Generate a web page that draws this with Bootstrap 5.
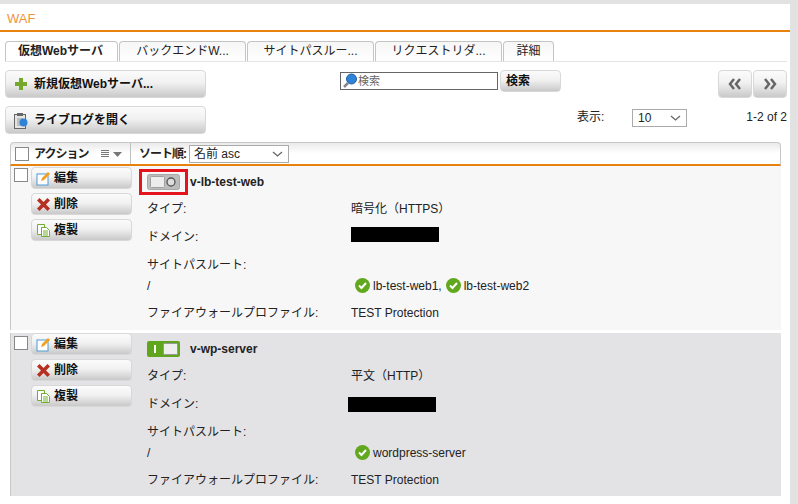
<!DOCTYPE html>
<html lang="ja">
<head>
<meta charset="utf-8">
<title>WAF</title>
<link rel="stylesheet" href="https://cdn.jsdelivr.net/npm/bootstrap@5.3.0/dist/css/bootstrap.min.css">
<style>
html,body{height:100%;overflow:hidden}
body{background:#e2e2e2;padding:4px 8px 0 0;font:12px/16px "Liberation Sans","Noto Sans CJK JP",sans-serif;color:#222}
.shell{background:#fff;height:500px;overflow:hidden}
.pane-title{height:28px;border-bottom:2px solid #e8820c;color:#f0953a;font-size:13px;padding:7px 0 0 7px;line-height:16px}
.tabstrip{margin:9px 3px 0 5px;gap:1px;height:21px;border-bottom:1px solid #e4e4e4}
.tabx{height:20px;border:1px solid #c4c4c4;border-bottom:0;border-radius:4px 4px 0 0;background:linear-gradient(#f6f6f6,#fff);text-align:center;line-height:19px;font-size:12px;color:#222;width:127px;flex:none}
.tabx.on{width:113px;font-weight:700;background:#fff;padding-right:2px}
.tabx.w50{width:51px}
.glossy{border:1px solid #d8d8d8;border-radius:4px;background:linear-gradient(#fbfbfb 0,#f1f1f1 45%,#c9c9c9 100%);font-weight:700;color:#111;display:flex;align-items:center;padding:0}
.bar-a{margin:8px 3px 0 5px;height:28px;position:relative}
.wide{width:201px;height:28px;font-size:12px;padding-left:8px;gap:6px}
.finder{margin-left:134px;margin-top:2px;width:158px;height:18px;border:1px solid #666;display:flex;align-items:center;font-size:11px;color:#666;padding-left:1px;background:#fff}
.go{width:61px;height:22px;margin-left:2px;padding-left:5px;font-size:12px}
.pg{width:34px;height:28px;justify-content:center}
.pg+.pg{margin-left:1px}
.bar-b{margin:8px 3px 0 5px;height:28px}
.show-lbl{margin-left:371px;width:55px;margin-top:3px}
.pick{border:1px solid #aaa;background:#fff;height:18px;font-size:12px;line-height:16px;padding:0 5px;display:flex;align-items:center;justify-content:space-between;color:#222}
.pick-a{width:55px;margin-top:3px}
.count{margin-left:auto;margin-top:3px}
.gridhead{margin:8px 9px 0 10px;height:24px;border:1px solid #c8c8c8;border-bottom:2px solid #e8820c;border-radius:4px 4px 0 0;background:linear-gradient(#eaeaea,#fff 50%);align-items:center}
.hcol{width:120px;height:100%;border-right:1px solid #c0c0c0;padding-left:4px;gap:5px;align-items:center;font-weight:700;flex:none}
.snug{letter-spacing:-1px}
.box{width:14px;height:14px;border:1px solid #888;background:#fff;flex:none;display:block}
.pick-s{width:100px;font-weight:400;height:18px;margin-left:3px;margin-top:1px;padding-left:4px}
.rowx{margin:0 9px 0 10px;border-left:1px solid #c8c8c8}
.rowx.r1{background:#f7f7f7;height:164px;margin-bottom:3px}
.rowx.r2{background:#e3e3e5;height:163px}
.acts{width:121px;flex:none;padding:1px 0 0 3px}
.r1 .box{margin-top:1px}
.r2 .acts{padding-top:0}
.r2 .box{margin-top:3px}
.stack{margin-left:3px;gap:4px;display:flex;flex-direction:column}
.mini{width:101px;height:22px;font-size:12px;padding-left:4px;gap:3px}
.body-c{padding-left:15px;flex:1}
.head-r{height:32px;margin-bottom:-3px;align-items:center;font-weight:700;gap:10px;position:relative}
.togg{width:33px;height:16px;display:block;flex:none}
.redframe{position:absolute;left:-8px;top:3px;width:49px;height:26px;border:3px solid #e3141e}
.line{height:28px;display:flex;align-items:center}
.k{width:204px;flex:none}
.mask{width:88px;height:15px;background:#000;display:block}
.mask-top{margin-top:-6px}
.mask-left{margin-left:-3px}
.pathline{height:21px;margin:-4px 0 3px}
.okc{width:15px;height:15px;flex:none;margin:0 3px 0 4px}
</style>
</head>
<body>
<div class="shell">
  <div class="pane-title">WAF</div>
  <div class="d-flex tabstrip">
    <div class="tabx on">仮想Webサーバ</div>
    <div class="tabx">バックエンドW...</div>
    <div class="tabx">サイトパスルー...</div>
    <div class="tabx">リクエストリダ...</div>
    <div class="tabx w50">詳細</div>
  </div>
  <div class="d-flex bar-a">
    <button class="glossy wide" type="button">
      <svg width="14" height="14" viewBox="0 0 14 14"><path d="M5 1h4v4h4v4H9v4H5V9H1V5h4z" fill="#76a82c"/></svg>
      新規仮想Webサーバ...
    </button>
    <div class="finder">
      <svg width="16" height="16" viewBox="0 0 16 16"><path d="M6 10l-4 4" stroke="#888" stroke-width="2.500"/><circle cx="9.500" cy="6" r="5" fill="#2f83d6" stroke="#1f5fa8"/></svg>検索
    </div>
    <button class="glossy go" type="button">検索</button>
    <button class="glossy pg ms-auto" type="button" aria-label="前へ"><svg width="14" height="12" viewBox="0 0 14 12"><path d="M6 1L2 6l4 5M12 1L8 6l4 5" fill="none" stroke="#666" stroke-width="2.500"/></svg></button>
    <button class="glossy pg" type="button" aria-label="次へ"><svg width="14" height="12" viewBox="0 0 14 12"><path d="M2 1l4 5-4 5M8 1l4 5-4 5" fill="none" stroke="#666" stroke-width="2.500"/></svg></button>
  </div>
  <div class="d-flex bar-b">
    <button class="glossy wide" type="button">
      <svg width="14" height="17" viewBox="0 0 14 17"><rect x=".5" y="2.500" width="11" height="14" fill="#e4e4e4" stroke="#666"/><rect x="3" y="1" width="6" height="3" fill="#666"/><path d="M3 7h6M3 9h4M3 11h4M3 13h4" stroke="#999"/><circle cx="9.500" cy="10.500" r="4" fill="#2f83d6"/></svg>
      ライブログを開く
    </button>
    <div class="show-lbl">表示:</div>
    <div class="pick pick-a">10 <svg width="11" height="6" viewBox="0 0 11 6"><path d="M1 1l4.500 4L10 1" fill="none" stroke="#666" stroke-width="1.300"/></svg></div>
    <div class="count">1-2 of 2</div>
  </div>
  <div class="d-flex gridhead">
    <div class="d-flex hcol">
      <span class="box"></span><span class="snug">アクション</span>
      <svg class="ms-auto me-2" width="21" height="8" viewBox="0 0 21 8"><path d="M0 .5h8M0 2.500h8M0 4.500h8M0 6.500h8" stroke="#777"/><path d="M12 2h9l-4.500 5z" fill="#777"/></svg>
    </div>
    <div class="d-flex align-items-center ps-2 fw-bold"><span class="snug">ソート順:</span>
      <div class="pick pick-s">名前 asc <svg width="11" height="6" viewBox="0 0 11 6"><path d="M1 1l4.500 4L10 1" fill="none" stroke="#666" stroke-width="1.300"/></svg></div>
    </div>
  </div>

  <div class="d-flex rowx r1">
    <div class="d-flex acts">
      <span class="box"></span>
      <div class="stack">
        <button class="glossy mini" type="button"><svg width="15" height="15" viewBox="0 0 15 15"><rect x="1" y="3" width="11" height="11" fill="#fff" stroke="#4a9bd8"/><path d="M5 10l1-3 6-6 2 2-6 6z" fill="#f0a020"/></svg>編集</button>
        <button class="glossy mini" type="button"><svg width="15" height="15" viewBox="0 0 15 15"><path d="M1 3.500L3.500 1l4 4 4-4L14 3.500l-4 4 4 4-2.500 2.500-4-4-4 4L1 11.500l4-4z" fill="#b53022"/></svg>削除</button>
        <button class="glossy mini" type="button"><svg width="15" height="15" viewBox="0 0 15 15"><path d="M1.500 1.500h7v3h-3v7h-4z" fill="#fff" stroke="#70b030"/><path d="M5.500 4.500h5l3 3v6h-8z" fill="#fff" stroke="#70b030"/><path d="M7 8h5M7 10h5M7 12h5" stroke="#70b030"/></svg>複製</button>
      </div>
    </div>
    <div class="body-c">
      <div class="d-flex head-r">
        <svg class="togg" viewBox="0 0 33 16"><rect x=".5" y=".5" width="32" height="15" rx="2" fill="#bdbdbd" stroke="#a8a8a8"/><rect x="3.500" y="2.500" width="14" height="11" rx="1" fill="#ececec" stroke="#a0a0a0"/><circle cx="24" cy="8" r="4" fill="#ddd" stroke="#555" stroke-width="1.300"/></svg>
        <span>v-lb-test-web</span>
        <span class="redframe"></span>
      </div>
      <div class="line"><span class="k">タイプ:</span><span>暗号化（HTTPS）</span></div>
      <div class="line"><span class="k">ドメイン:</span><span class="mask mask-top"></span></div>
      <div class="line"><span class="k">サイトパスルート:</span></div>
      <div class="line pathline"><span class="k">/</span>
        <svg class="okc" viewBox="0 0 15 15"><circle cx="7.500" cy="7.500" r="7.500" fill="#62a81e"/><path d="M4 7.500l2.500 2.500L11 5" fill="none" stroke="#fff" stroke-width="2"/></svg><span>lb-test-web1,</span>
        <svg class="okc" viewBox="0 0 15 15"><circle cx="7.500" cy="7.500" r="7.500" fill="#62a81e"/><path d="M4 7.500l2.500 2.500L11 5" fill="none" stroke="#fff" stroke-width="2"/></svg><span>lb-test-web2</span>
      </div>
      <div class="line"><span class="k">ファイアウォールプロファイル:</span><span>TEST Protection</span></div>
    </div>
  </div>

  <div class="d-flex rowx r2">
    <div class="d-flex acts">
      <span class="box"></span>
      <div class="stack">
        <button class="glossy mini" type="button"><svg width="15" height="15" viewBox="0 0 15 15"><rect x="1" y="3" width="11" height="11" fill="#fff" stroke="#4a9bd8"/><path d="M5 10l1-3 6-6 2 2-6 6z" fill="#f0a020"/></svg>編集</button>
        <button class="glossy mini" type="button"><svg width="15" height="15" viewBox="0 0 15 15"><path d="M1 3.500L3.500 1l4 4 4-4L14 3.500l-4 4 4 4-2.500 2.500-4-4-4 4L1 11.500l4-4z" fill="#b53022"/></svg>削除</button>
        <button class="glossy mini" type="button"><svg width="15" height="15" viewBox="0 0 15 15"><path d="M1.500 1.500h7v3h-3v7h-4z" fill="#fff" stroke="#70b030"/><path d="M5.500 4.500h5l3 3v6h-8z" fill="#fff" stroke="#70b030"/><path d="M7 8h5M7 10h5M7 12h5" stroke="#70b030"/></svg>複製</button>
      </div>
    </div>
    <div class="body-c">
      <div class="d-flex head-r">
        <svg class="togg" viewBox="0 0 33 16"><rect width="33" height="16" rx="2" fill="#5fa51e"/><rect x="16.500" y="2.500" width="14" height="11" rx="1" fill="#eee" stroke="#999"/><path d="M8 4v8" stroke="#fff" stroke-width="2"/></svg>
        <span>v-wp-server</span>
      </div>
      <div class="line"><span class="k">タイプ:</span><span>平文（HTTP）</span></div>
      <div class="line"><span class="k">ドメイン:</span><span class="mask mask-left"></span></div>
      <div class="line"><span class="k">サイトパスルート:</span></div>
      <div class="line pathline"><span class="k">/</span>
        <svg class="okc" viewBox="0 0 15 15"><circle cx="7.500" cy="7.500" r="7.500" fill="#62a81e"/><path d="M4 7.500l2.500 2.500L11 5" fill="none" stroke="#fff" stroke-width="2"/></svg><span>wordpress-server</span>
      </div>
      <div class="line"><span class="k">ファイアウォールプロファイル:</span><span>TEST Protection</span></div>
    </div>
  </div>
</div>
</body>
</html>
